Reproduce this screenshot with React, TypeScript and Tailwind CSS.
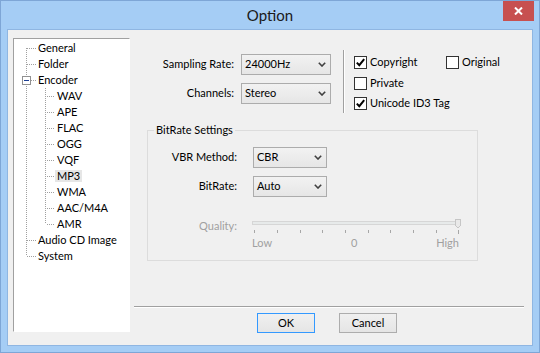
import React from "react";

const DOT = "#a0a0a0";

type Node = {
  label: string;
  level: number;
  first?: boolean;
  last?: boolean;
  toggle?: boolean;
  lastChild?: boolean;
  selected?: boolean;
};

const tree: Node[] = [
  { label: "General", level: 0, first: true },
  { label: "Folder", level: 0 },
  { label: "Encoder", level: 0, toggle: true },
  { label: "WAV", level: 1 },
  { label: "APE", level: 1 },
  { label: "FLAC", level: 1 },
  { label: "OGG", level: 1 },
  { label: "VQF", level: 1 },
  { label: "MP3", level: 1, selected: true },
  { label: "WMA", level: 1 },
  { label: "AAC/M4A", level: 1 },
  { label: "AMR", level: 1, lastChild: true },
  { label: "Audio CD Image", level: 0 },
  { label: "System", level: 0, last: true },
];

const TreeRow = ({ node }: { node: Node }) => {
  const w = node.level === 0 ? 22 : 41;
  return (
    <div className="flex h-[16px] items-center">
      <svg width={w} height={16} shapeRendering="crispEdges" className="shrink-0">
        <line
          x1={12.5}
          x2={12.5}
          y1={node.first ? 8 : 0}
          y2={node.last ? 8 : 16}
          stroke={DOT}
          strokeDasharray="1 1"
        />
        {node.level === 0 ? (
          <line x1={node.toggle ? 17 : 13} x2={22} y1={8.5} y2={8.5} stroke={DOT} strokeDasharray="1 1" />
        ) : (
          <>
            <line x1={31.5} x2={31.5} y1={0} y2={node.lastChild ? 8 : 16} stroke={DOT} strokeDasharray="1 1" />
            <line x1={33} x2={41} y1={8.5} y2={8.5} stroke={DOT} strokeDasharray="1 1" />
          </>
        )}
        {node.toggle && (
          <>
            <rect x={8.5} y={4.5} width={8} height={8} fill="#fff" stroke="#919191" />
            <line x1={10} x2={15} y1={8.5} y2={8.5} stroke="#1c3f94" />
          </>
        )}
      </svg>
      <span className={`px-[2px] leading-[12px] ${node.selected ? "bg-[#e6e6e6]" : ""}`}>{node.label}</span>
    </div>
  );
};

const Chevron = () => (
  <svg width="8" height="5" viewBox="0 0 8 5" className="shrink-0">
    <path d="M0.8 0.8 L4 4 L7.2 0.8" fill="none" stroke="#404040" strokeWidth="1.6" />
  </svg>
);

const Select = ({ value, w }: { value: string; w: string }) => (
  <div
    className={`flex h-[21px] ${w} items-center justify-between border border-[#acacac] bg-gradient-to-b from-[#f2f2f2] to-[#e6e6e6] pl-[3px] pr-[4px]`}
  >
    <span>{value}</span>
    <Chevron />
  </div>
);

const Check = ({ checked, label }: { checked?: boolean; label: string }) => (
  <div className="flex items-center gap-[3px]">
    <div className="flex h-[13px] w-[13px] items-center justify-center border border-[#333] bg-white">
      {checked && (
        <svg width="11" height="11" viewBox="0 0 11 11">
          <path d="M1.8 5.6 L4.3 8.2 L9.2 2.2" fill="none" stroke="#000" strokeWidth="2" />
        </svg>
      )}
    </div>
    <span>{label}</span>
  </div>
);

const ticks = [2, 25, 48, 70, 93, 116, 138, 161, 184, 206];

const Slider = () => (
  <div className="flex w-[210px] flex-col">
    <svg width="210" height="19" shapeRendering="crispEdges">
      <rect x={0.5} y={4.5} width={207} height={3} fill="#e7eaea" stroke="#d6d6d6" />
      <polygon points="203.5,2.5 208.5,2.5 208.5,8.5 206,11 203.5,8.5" fill="#e9e9e9" stroke="#c6c6c6" />
      {ticks.map((t) => (
        <line key={t} x1={t + 0.5} x2={t + 0.5} y1={13} y2={t === 206 ? 17 : 16} stroke="#a7a7a7" />
      ))}
    </svg>
    <div className="flex w-[207px] justify-between leading-[14px] text-[#a0a0a0]">
      <span>Low</span>
      <span>0</span>
      <span>High</span>
    </div>
  </div>
);

const Button = ({ label, focus }: { label: string; focus?: boolean }) => (
  <button
    className={`h-[20px] w-[58px] border bg-gradient-to-b from-[#f0f0f0] to-[#e5e5e5] ${
      focus ? "border-[#3399ff]" : "border-[#adadad]"
    }`}
  >
    {label}
  </button>
);

export default function App() {
  return (
    <div className="flex h-[353px] w-[540px] flex-col border border-[#7ea6d6] bg-[#a5cdf5] font-['Lato',sans-serif] text-[11px] text-black">
      <div className="relative flex h-[28px] shrink-0 items-center justify-center">
        <span className="text-[15px] text-[#1a1a1a]">Option</span>
        <div className="absolute right-[5px] top-0 flex h-[20px] w-[31px] items-center justify-center bg-[#c75050]">
          <svg width="9" height="8" viewBox="0 0 9 8">
            <path d="M1 0.5 L8 7.5 M8 0.5 L1 7.5" stroke="#fff" strokeWidth="2" />
          </svg>
        </div>
      </div>

      <div className="mx-[6px] flex h-[317px] shrink-0 border border-[#8fb6e2] bg-[#f0f0f0]">
        {/* tree */}
        <div className="ml-[5px] mt-[8px] h-[294px] w-[117px] shrink-0 border-l border-t border-b border-r border-l-[#a0a0a0] border-t-[#a0a0a0] border-b-white border-r-white bg-white pt-[1px]">
          {tree.map((n) => (
            <TreeRow key={n.label} node={n} />
          ))}
        </div>

        {/* settings */}
        <div className="flex flex-1 flex-col">
          <div className="mt-[20px] flex h-[63px] items-start">
            <div className="flex flex-col gap-[8px] pt-[4px]">
              <div className="flex items-center gap-[7px]">
                <span className="w-[104px] text-right">Sampling Rate:</span>
                <Select value="24000Hz" w="w-[90px]" />
              </div>
              <div className="flex items-center gap-[7px]">
                <span className="w-[104px] text-right">Channels:</span>
                <Select value="Stereo" w="w-[90px]" />
              </div>
            </div>
            <div className="ml-[12px] h-[63px] w-[2px] border-l border-r border-l-[#a0a0a0] border-r-white" />
            <div className="ml-[9px] flex flex-col pt-[2px]">
              <div className="flex h-[21px] items-center">
                <div className="w-[92px]">
                  <Check checked label="Copyright" />
                </div>
                <Check label="Original" />
              </div>
              <div className="flex h-[20px] items-center">
                <Check label="Private" />
              </div>
              <div className="flex h-[21px] items-center">
                <Check checked label="Unicode ID3 Tag" />
              </div>
            </div>
          </div>

          <fieldset className="ml-[17px] mt-[9px] w-[331px] border border-[#dcdcdc] pb-[10px]">
            <legend className="ml-[6px] px-[2px] leading-[16px]">BitRate Settings</legend>
            <div className="flex flex-col pt-[9px]">
              <div className="flex items-center gap-[16px]">
                <span className="w-[89px] text-right">VBR Method:</span>
                <Select value="CBR" w="w-[74px]" />
              </div>
              <div className="mt-[8px] flex items-center gap-[16px]">
                <span className="w-[89px] text-right">BitRate:</span>
                <Select value="Auto" w="w-[74px]" />
              </div>
              <div className="mt-[20px] flex items-start gap-[15px]">
                <span className="mt-[1px] w-[89px] text-right leading-[16px] text-[#a0a0a0]">Quality:</span>
                <Slider />
              </div>
            </div>
          </fieldset>

          <div className="ml-[4px] mt-auto flex w-[390px] flex-col pb-[12px]">
            <div className="h-[2px] border-b border-t border-b-white border-t-[#a0a0a0]" />
            <div className="ml-[123px] mt-[5px] flex gap-[24px]">
              <Button label="OK" focus />
              <Button label="Cancel" />
            </div>
          </div>
        </div>
      </div>
    </div>
  );
}
